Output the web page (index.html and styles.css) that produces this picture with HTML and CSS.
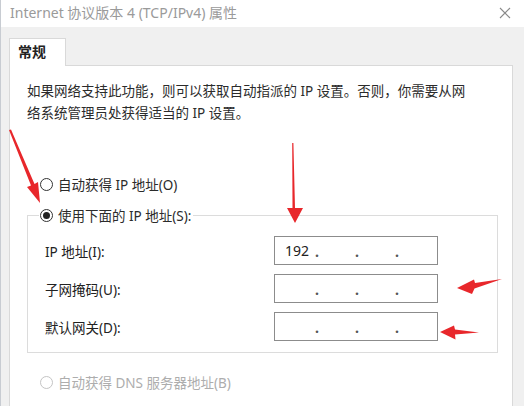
FILE: index.html
```html
<!DOCTYPE html>
<html lang="zh-CN">
<head>
    <meta charset="UTF-8">
    <meta name="viewport" content="width=device-width, initial-scale=1.0">
    <title>Internet 协议版本 4 (TCP/IPv4) 属性</title>
    <link rel="stylesheet" href="styles.css">
</head>
<body>
    <div class="window">
        <div class="titlebar">
            <span class="title">Internet 协议版本 4 (TCP/IPv4) 属性</span>
            <svg class="close" width="12" height="12" viewBox="0 0 12 12">
                <path d="M1 1 L11 11 M11 1 L1 11" stroke="#8a8a8a" stroke-width="1.1" fill="none"/>
            </svg>
        </div>

        <div class="content">
            <div class="tabs">
                <div class="tab">常规</div>
            </div>

            <div class="panel">
                <p class="intro">如果网络支持此功能，则可以获取自动指派的 IP 设置。否则，你需要从网<br>络系统管理员处获得适当的 IP 设置。</p>

                <div class="radio"><span class="circle"></span>自动获得 IP 地址(O)</div>

                <fieldset class="group">
                    <legend class="radio"><span class="circle checked"></span>使用下面的 IP 地址(S):</legend>
                    <div class="row">
                        <span class="label">IP 地址(I):</span>
                        <div class="ipbox">
                            <span class="octet">192</span><span class="sep">.</span>
                            <span class="octet"></span><span class="sep">.</span>
                            <span class="octet"></span><span class="sep">.</span>
                            <span class="octet"></span>
                        </div>
                    </div>
                    <div class="row">
                        <span class="label">子网掩码(U):</span>
                        <div class="ipbox">
                            <span class="octet"></span><span class="sep">.</span>
                            <span class="octet"></span><span class="sep">.</span>
                            <span class="octet"></span><span class="sep">.</span>
                            <span class="octet"></span>
                        </div>
                    </div>
                    <div class="row">
                        <span class="label">默认网关(D):</span>
                        <div class="ipbox">
                            <span class="octet"></span><span class="sep">.</span>
                            <span class="octet"></span><span class="sep">.</span>
                            <span class="octet"></span><span class="sep">.</span>
                            <span class="octet"></span>
                        </div>
                    </div>
                </fieldset>

                <div class="radio disabled"><span class="circle"></span>自动获得 DNS 服务器地址(B)</div>
            </div>
        </div>

        <!-- red annotation arrows drawn over the dialog -->
        <svg class="marks" width="524" height="406" viewBox="0 0 524 406">
            <g fill="#e8272b">
                <polygon points="9,130 11,129.5 34.5,184 38,182 40,203 27,187 31,185.5"/>
                <polygon points="292.2,143 293.4,143 295,208 303,208 295,223 287,208 292.5,208"/>
                <polygon points="457,288 474,279.5 475,283 502,279 474.5,288.5 472,294"/>
                <polygon points="440,332 454,325.5 455,329.5 479,332.5 455,334.5 455.5,339.5"/>
            </g>
        </svg>
    </div>
</body>
</html>
```

FILE: styles.css
```css
body {
    margin: 0;
    background-color: #f0f0f0;
    font-family: "Noto Sans", "Noto Sans CJK SC", sans-serif;
    font-size: 13.5px;
    color: #2b2b2b;
    overflow: hidden;
}
.window {
    position: relative;
    width: 524px;
    height: 406px;
    overflow: hidden;
    border-left: 1px solid #c8ccd2;
    box-sizing: border-box;
}
.titlebar {
    height: 27px;
    background-color: #ffffff;
    display: flex;
    align-items: center;
    justify-content: space-between;
    padding: 0 13px 3px 9px;
    box-sizing: border-box;
}
.title {
    font-size: 14px;
    color: #9a9a9a;
}
.close {
    margin-top: 2px;
}
.tabs {
    display: flex;
    padding: 11px 0 0 8px;
}
.tab {
    position: relative;
    z-index: 1;
    width: 57px;
    height: 28px;
    box-sizing: border-box;
    background-color: #ffffff;
    border: 1px solid #d9d9d9;
    border-bottom: none;
    margin-bottom: -1px;
    padding-left: 8px;
    line-height: 26px;
    font-size: 14px;
    font-weight: bold;
    color: #222;
}
.panel {
    margin: 0 11px 0 8px;
    height: 400px;
    background-color: #ffffff;
    border: 1px solid #d9d9d9;
    padding: 14px 0 0 17px;
}
.intro {
    margin: 0;
    line-height: 22px;
}
.radio {
    display: flex;
    align-items: center;
    height: 22px;
    padding-left: 13px;
}
.panel > .radio:first-of-type {
    margin-top: 49px;
}
.circle {
    width: 13px;
    height: 13px;
    box-sizing: border-box;
    border: 1px solid #333;
    border-radius: 50%;
    margin-right: 5px;
    display: flex;
    align-items: center;
    justify-content: center;
}
.circle.checked::after {
    content: "";
    width: 7px;
    height: 7px;
    border-radius: 50%;
    background-color: #222;
}
.radio.disabled {
    margin-top: 18px;
    color: #adadad;
}
.radio.disabled .circle {
    border-color: #c4c4c4;
}
.group {
    margin: 9px 14px 0 0;
    border: 1px solid #dcdcdc;
    padding: 10px 0 11px 0;
    display: flex;
    flex-direction: column;
    gap: 9px;
}
.group legend.radio {
    margin-left: 11px;
    padding: 0 2px 0 1px;
}
.row {
    display: flex;
    align-items: center;
    height: 29px;
    padding-left: 17px;
}
.label {
    width: 229px;
    color: #222;
}
.ipbox {
    width: 164px;
    height: 29px;
    box-sizing: border-box;
    border: 1px solid #8c8c8c;
    padding-left: 6px;
    display: flex;
    align-items: center;
    font-size: 14px;
    color: #222;
}
.octet {
    width: 32px;
    text-align: center;
}
.sep {
    width: 8px;
    text-align: center;
    color: #555;
    font-weight: bold;
    margin-top: 2px;
}
.marks {
    position: absolute;
    left: -1px;
    top: 0;
    pointer-events: none;
}
```
